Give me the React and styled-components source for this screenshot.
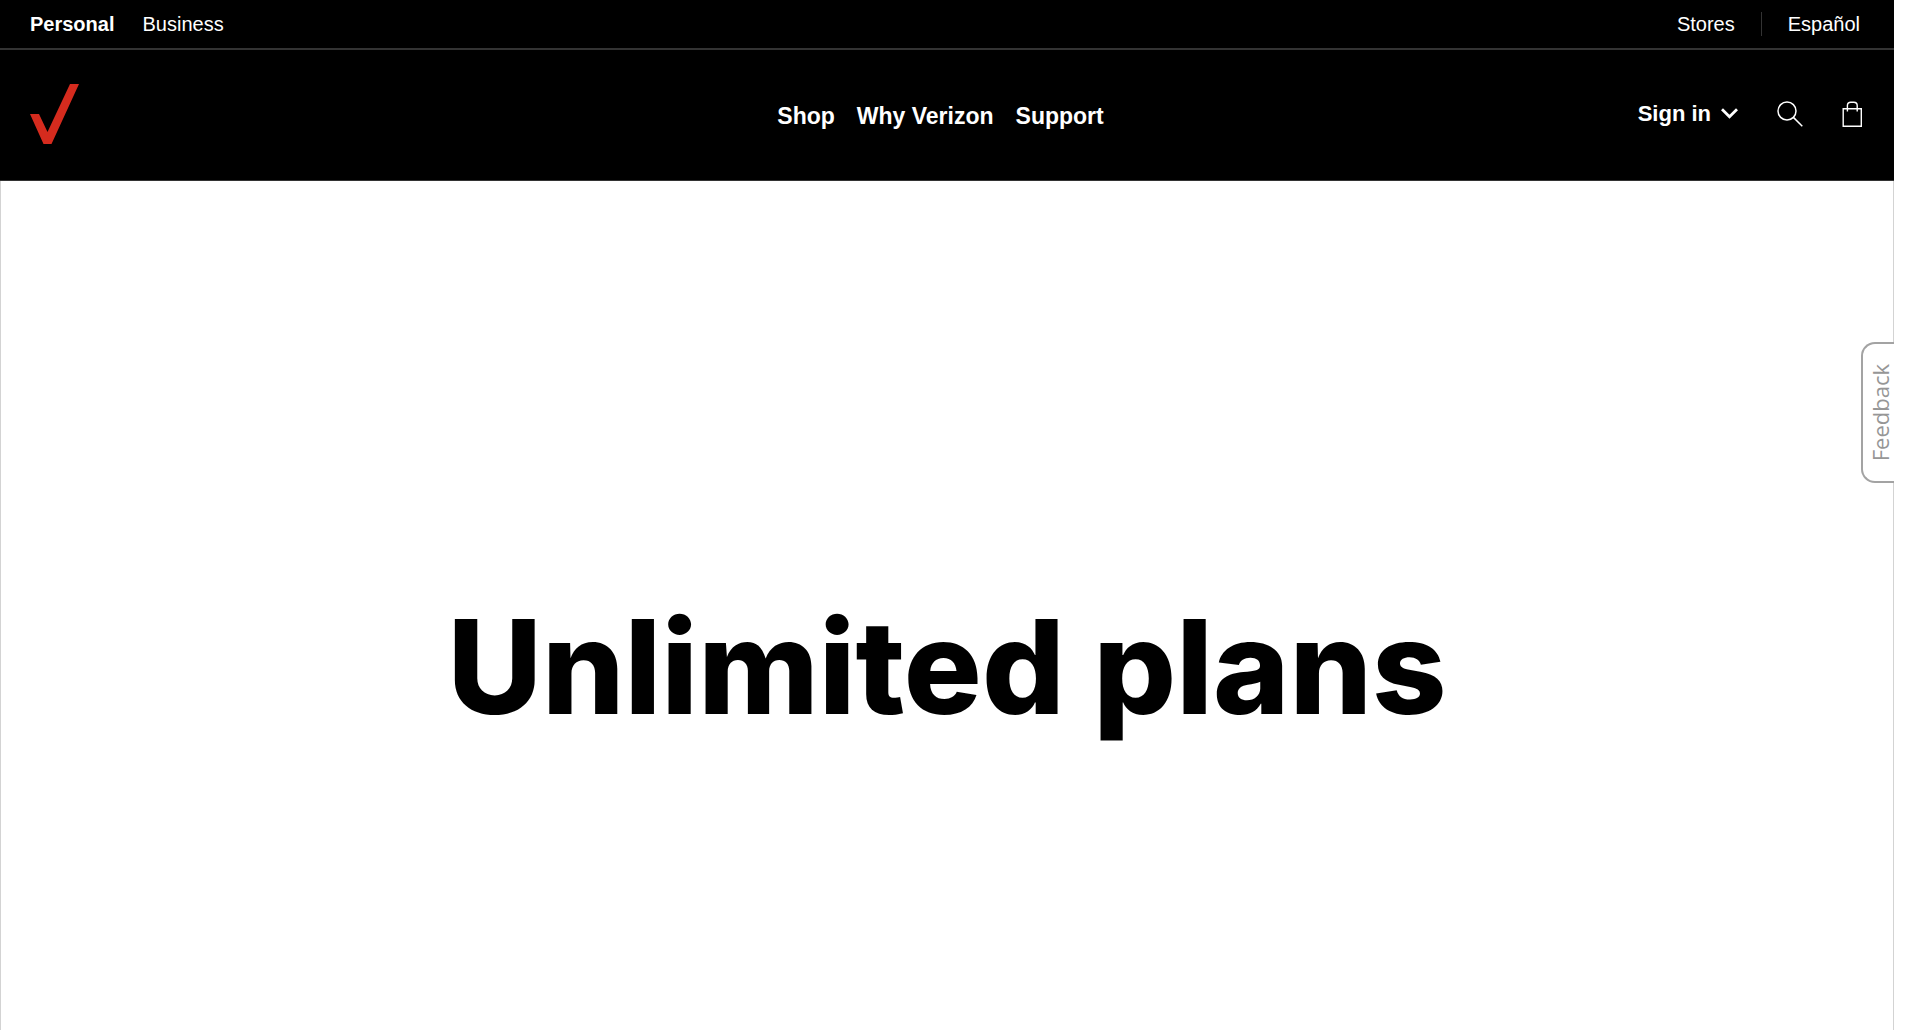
import React from "react";
import styled, { createGlobalStyle } from "styled-components";

const GlobalStyle = createGlobalStyle`
  *, *::before, *::after { box-sizing: border-box; }
  body {
    margin: 0;
    background: #fff;
    color: #000;
    font-family: "Liberation Sans", Arial, sans-serif;
  }
`;

const Page = styled.div`
  position: relative;
  display: flex;
  flex-direction: column;
  min-height: 100vh;
  margin-right: 26px;
`;

const Header = styled.header`
  background: #000;
  color: #fff;
  border-bottom: 1px solid #333;
`;

const UtilityBar = styled.div`
  display: flex;
  justify-content: space-between;
  align-items: center;
  height: 50px;
  padding: 0 34px 0 30px;
  border-bottom: 2px solid #333;
`;

const UtilityGroup = styled.nav`
  display: flex;
  align-items: center;
  gap: ${(p) => p.$gap}px;
`;

const UtilityLink = styled.a`
  color: #fff;
  font-size: 20px;
  line-height: 24px;
  font-weight: ${(p) => (p.$active ? 700 : 400)};
  text-decoration: none;
`;

const Divider = styled.span`
  width: 1px;
  height: 24px;
  background: #333;
`;

const MainBar = styled.div`
  display: grid;
  grid-template-columns: 1fr auto 1fr;
  align-items: center;
  height: 130px;
  padding: 0 31px 2px 30px;
`;

const LogoLink = styled.a`
  display: block;
  justify-self: start;
  line-height: 0;
`;

const MenuList = styled.nav`
  display: flex;
  gap: 10px;
`;

const MenuButton = styled.button`
  display: flex;
  align-items: center;
  gap: 10px;
  margin: 0;
  padding: ${(p) => (p.$bare ? "0" : "3px 12px 0 0")};
  border: 0;
  background: none;
  color: #fff;
  font: 700 ${(p) => (p.$bare ? 22 : 23)}px/28px "Liberation Sans", Arial, sans-serif;
  cursor: pointer;
`;

const Tools = styled.div`
  display: flex;
  justify-content: flex-end;
  align-items: center;
  padding-bottom: 1px;
  gap: 39px;
`;

const IconButton = styled.button`
  display: block;
  padding: 0;
  border: 0;
  background: none;
  line-height: 0;
  cursor: pointer;
`;

const Hero = styled.main`
  display: flex;
  flex: 1;
  justify-content: center;
  align-items: center;
  padding-top: 122px;
  border: solid #d3d3d3;
  border-width: 0 1px;
`;

const Title = styled.h1`
  margin: 0;
  font-family: Inter, "Liberation Sans", Arial, sans-serif;
  font-size: 130px;
  line-height: 160px;
  font-weight: 800;
  text-align: center;
`;

const FeedbackTab = styled.button`
  position: absolute;
  top: 342px;
  right: 0;
  display: flex;
  justify-content: center;
  align-items: center;
  width: 33px;
  height: 141px;
  padding: 0 0 0 2px;
  border: 2px solid #a3a3a3;
  border-right: 0;
  border-radius: 14px 0 0 14px;
  background: #fff;
  color: #969696;
  cursor: pointer;
`;

const FeedbackLabel = styled.span`
  font: 400 22px/24px "Open Sans", "Noto Sans", sans-serif;
  writing-mode: vertical-rl;
  transform: rotate(180deg);
`;

const CheckLogo = () => (
  <svg width="49" height="60" viewBox="0 0 49 60" fill="#d52b1e" aria-hidden="true">
    <path d="M0 30H9L17.5 48L40 0H49L21.5 60H13.5Z" />
  </svg>
);

const ChevronIcon = () => (
  <svg width="17" height="11" viewBox="0 0 17 11" fill="none" stroke="#fff" strokeWidth="2.8" aria-hidden="true">
    <path d="M1 1.2L8.5 8.7L16 1.2" />
  </svg>
);

const SearchIcon = () => (
  <svg width="26" height="26" viewBox="0 0 26 26" fill="none" stroke="#fff" strokeWidth="1.5" aria-hidden="true">
    <circle cx="10" cy="10" r="9" />
    <path d="M16.4 16.4L25.3 25.3" />
  </svg>
);

const BagIcon = () => (
  <svg width="21" height="26" viewBox="0 0 21 26" fill="none" stroke="#fff" strokeWidth="1.4" aria-hidden="true">
    <path d="M1.2 7.7H19.3V25.2H1.2Z" />
    <path d="M5.4 10.5V4.6Q5.4 1.2 8.8 1.2H11.8Q15.2 1.2 15.2 4.6V10.5" />
  </svg>
);

export default function App() {
  return (
    <>
      <GlobalStyle />
      <Page>
        <Header>
          <UtilityBar>
            <UtilityGroup $gap={28} aria-label="Account type">
              <UtilityLink href="#personal" $active>Personal</UtilityLink>
              <UtilityLink href="#business">Business</UtilityLink>
            </UtilityGroup>
            <UtilityGroup $gap={26} aria-label="Utility">
              <UtilityLink href="#stores">Stores</UtilityLink>
              <Divider />
              <UtilityLink href="#espanol" lang="es">Español</UtilityLink>
            </UtilityGroup>
          </UtilityBar>
          <MainBar>
            <LogoLink href="#home" aria-label="Verizon home">
              <CheckLogo />
            </LogoLink>
            <MenuList aria-label="Main">
              <MenuButton>Shop</MenuButton>
              <MenuButton>Why Verizon</MenuButton>
              <MenuButton>Support</MenuButton>
            </MenuList>
            <Tools>
              <MenuButton $bare>
                Sign in
                <ChevronIcon />
              </MenuButton>
              <IconButton aria-label="Search">
                <SearchIcon />
              </IconButton>
              <IconButton aria-label="Shopping bag">
                <BagIcon />
              </IconButton>
            </Tools>
          </MainBar>
        </Header>
        <Hero>
          <Title>Unlimited plans</Title>
        </Hero>
        <FeedbackTab>
          <FeedbackLabel>Feedback</FeedbackLabel>
        </FeedbackTab>
      </Page>
    </>
  );
}
